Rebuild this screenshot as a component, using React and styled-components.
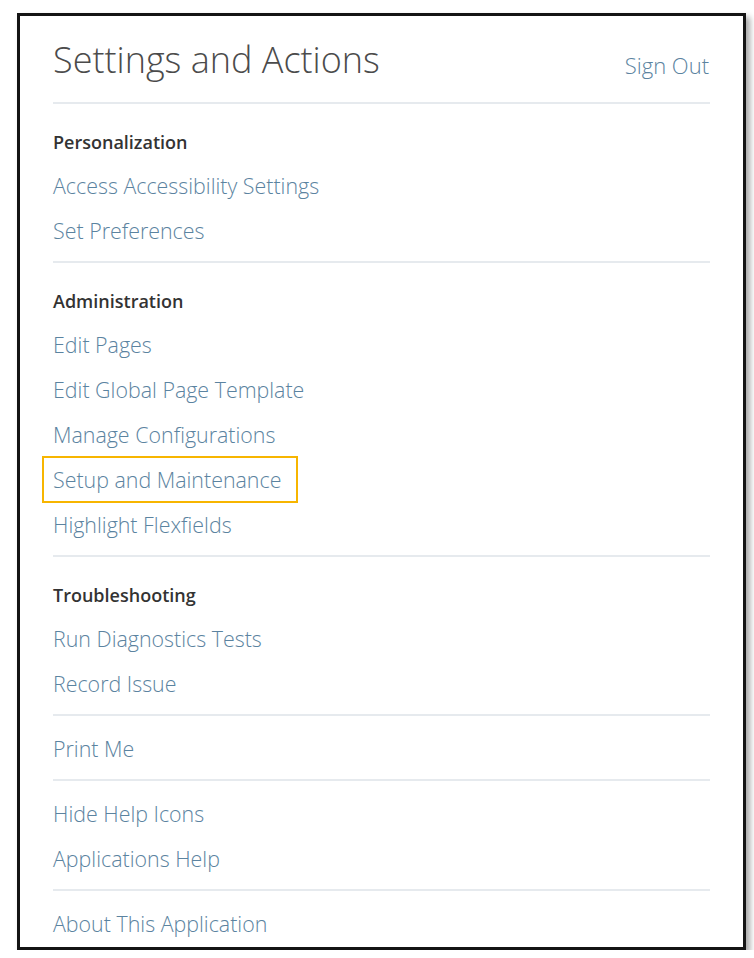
import React from "react";
import styled, { createGlobalStyle } from "styled-components";

const GlobalStyle = createGlobalStyle`
  body {
    margin: 0;
    background: #ffffff;
    font-family: "Open Sans", "Noto Sans", sans-serif;
  }
`;

const Frame = styled.div`
  margin: 13px 0 0 17px;
  width: 729px;
  box-sizing: border-box;
  border: 3px solid #141414;
  box-shadow: 4px 4px 6px rgba(0, 0, 0, 0.35);
  background: #fff;
  padding: 0 33px;
`;

const Header = styled.div`
  display: flex;
  justify-content: space-between;
  align-items: center;
  padding: 21px 0 19px;
`;

const Title = styled.h1`
  margin: 0;
  font-size: 36px;
  line-height: 46px;
  font-weight: 300;
  color: #4b4b4b;
`;

const SignOut = styled.a`
  font-size: 22px;
  font-weight: 300;
  color: #5b83a0;
  margin-top: 10px;
  margin-right: 1px;
`;

const Section = styled.div`
  border-top: 2px solid #e6eaee;
  padding: ${(p) => (p.$titled ? "23px" : "10px")} 0 8px;
  &:last-child {
    padding-bottom: 1px;
  }
`;

const Heading = styled.div`
  font-size: 18px;
  font-weight: 600;
  line-height: 30px;
  color: #333;
  margin-bottom: 6px;
`;

const Item = styled.div`
  display: block;
  line-height: 45px;
  height: 45px;
`;

const Link = styled.a`
  display: inline-block;
  font-size: 21.4px;
  font-weight: 300;
  color: #5b83a0;
  ${(p) =>
    p.$marked &&
    `
    margin-left: -10px;
    padding: 0 16px 0 10px;
    outline: 2px solid #f7b500;
    outline-offset: -1px;
  `}
`;

const sections = [
  {
    title: "Personalization",
    items: ["Access Accessibility Settings", "Set Preferences"],
  },
  {
    title: "Administration",
    items: [
      "Edit Pages",
      "Edit Global Page Template",
      "Manage Configurations",
      "Setup and Maintenance",
      "Highlight Flexfields",
    ],
  },
  {
    title: "Troubleshooting",
    items: ["Run Diagnostics Tests", "Record Issue"],
  },
  { items: ["Print Me"] },
  { items: ["Hide Help Icons", "Applications Help"] },
  { items: ["About This Application"] },
];

const App = () => {
  return (
    <>
      <GlobalStyle />
      <Frame>
        <Header>
          <Title>Settings and Actions</Title>
          <SignOut>Sign Out</SignOut>
        </Header>
        {sections.map((s, i) => (
          <Section key={i} $titled={!!s.title}>
            {s.title && <Heading>{s.title}</Heading>}
            {s.items.map((it) => (
              <Item key={it}>
                <Link $marked={it === "Setup and Maintenance"}>{it}</Link>
              </Item>
            ))}
          </Section>
        ))}
      </Frame>
    </>
  );
};

export default App;
